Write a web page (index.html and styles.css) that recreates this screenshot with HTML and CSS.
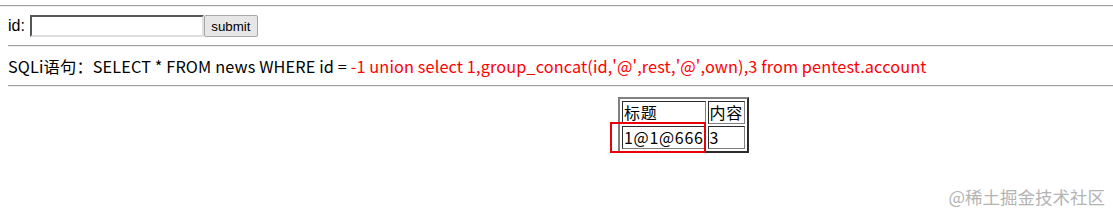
FILE: index.html
```html
<!DOCTYPE html>
<html lang="zh-CN">

<head>
    <meta charset="UTF-8" />
    <title>SQLi</title>
    <link rel="stylesheet" href="styles.css">
</head>

<body>
    <hr class="top-rule">

    <form class="query">
        id: <input type="text" name="id" class="id-input"><input type="submit" value="submit" class="submit-btn">
    </form>

    <hr class="rule">

    <div class="sql-line">
        SQLi语句：SELECT * FROM news WHERE id = <span class="injected">-1 union select 1,group_concat(id,'@',rest,'@',own),3 from pentest.account</span>
    </div>

    <hr class="rule">

    <div class="result">
        <div class="table-wrap">
            <table class="news">
                <tr>
                    <td>标题</td>
                    <td>内容</td>
                </tr>
                <tr>
                    <td>1@1@666</td>
                    <td>3</td>
                </tr>
            </table>
            <!-- highlight box -->
            <div class="mark"></div>
        </div>
    </div>

    <div class="watermark">@稀土掘金技术社区</div>
</body>

</html>
```

FILE: styles.css
```css
body {
    margin: 0;
    padding: 0 0 0 8px;
    background: #fff;
    color: #000;
    font-family: "Liberation Sans", Arial, sans-serif;
    font-size: 16px;
    height: 215px;
    box-sizing: border-box;
    overflow: hidden;
}

hr {
    height: 0;
    border: 0;
    border-top: 1px solid #a0a0a0;
    border-bottom: 1px solid #eeeeee;
}

.top-rule {
    margin: 5px 0 0 -8px;
}

.rule {
    margin: 0;
}

.query {
    display: flex;
    align-items: center;
    height: 38px;
    margin: 0;
    white-space: nowrap;
}

.id-input {
    width: 168px;
    height: 16px;
    margin: 0 0 0 5px;
    padding: 1px;
    border: 2px inset #ebe9ed;
    border-color: #a9a9a9 #e0e0e0 #e0e0e0 #a9a9a9;
    font-size: 13px;
}

.submit-btn {
    width: 54px;
    height: 22px;
    margin: 0;
    padding: 1px 4px;
    font-family: "Liberation Sans", Arial, sans-serif;
    font-size: 13.33px;
    color: #000;
    background: #e6e6e6;
    border: 1px solid #a6a6a6;
    border-radius: 2px;
}

.sql-line {
    height: 38px;
    line-height: 38px;
    font-family: "Noto Sans CJK SC", "Noto Sans", sans-serif;
    font-size: 16.3px;
    letter-spacing: 0.12px;
    white-space: nowrap;
}

.injected {
    color: #ff0000;
}

.result {
    padding: 10px 0 0 610px;
}

.table-wrap {
    position: relative;
    display: inline-block;
}

.news {
    border: 2px outset gray;
    border-spacing: 2px;
    font-family: "Noto Sans CJK SC", "Noto Sans", sans-serif;
    font-size: 16px;
    letter-spacing: 0.7px;
}

.news td {
    border: 1px inset gray;
    padding: 0 1px;
    line-height: 21px;
}

.mark {
    position: absolute;
    left: -8px;
    top: 25px;
    width: 92px;
    height: 27px;
    border: 2px solid #e8000b;
}

.watermark {
    position: absolute;
    right: 8px;
    bottom: 6px;
    font-family: "Noto Sans CJK SC", sans-serif;
    font-size: 17.5px;
    color: #b4b4b4;
}
```
